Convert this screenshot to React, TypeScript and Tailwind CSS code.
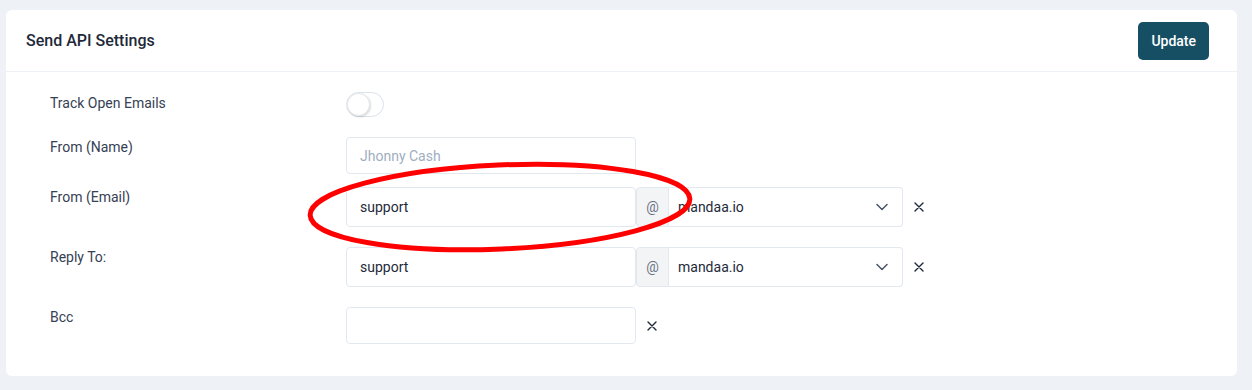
import React from 'react';

const font = { fontFamily: 'Roboto, "Liberation Sans", sans-serif' };

function Chevron() {
  return (
    <svg width="12" height="8" viewBox="0 0 12 8" fill="none" className="text-gray-600">
      <path d="M1 1.5l5 5 5-5" stroke="currentColor" strokeWidth="1.5" strokeLinecap="round" strokeLinejoin="round" />
    </svg>
  );
}

function Close() {
  return (
    <button className="ml-[11px] text-gray-800">
      <svg width="10" height="10" viewBox="0 0 10 10" fill="none">
        <path d="M1 1l8 8M9 1l-8 8" stroke="currentColor" strokeWidth="1.4" strokeLinecap="round" />
      </svg>
    </button>
  );
}

function EmailField({ user }: { user: string }) {
  return (
    <div className="flex items-center">
      <input
        defaultValue={user}
        className="w-[290px] h-[40px] px-[13px] text-sm text-gray-800 border border-[#e2e8f0] rounded-[4px] outline-none"
      />
      <div className="w-[33px] h-[40px] flex items-center justify-center bg-[#f3f4f6] border border-[#e2e8f0] text-sm text-gray-500 rounded-l-[4px]">
        @
      </div>
      <div className="w-[234px] h-[40px] flex items-center justify-between pl-[9px] pr-[14px] border border-l-0 border-[#e2e8f0] rounded-r-[4px] text-sm text-gray-800">
        <span>mandaa.io</span>
        <Chevron />
      </div>
      <Close />
    </div>
  );
}

export default function App() {
  return (
    <div className="h-[390px] bg-[#eef1f6] pt-[10px] pl-[6px] pr-[15px]" style={font}>
      <div className="relative bg-white rounded-md h-[366px]">
        {/* Header */}
        <div className="h-[62px] flex items-center justify-between pl-5 pr-7 border-b border-[#edf0f4]">
          <h2 className="text-base font-medium text-gray-800">Send API Settings</h2>
          <button className="h-[38px] px-[13px] bg-[#164e63] text-white text-sm font-medium rounded-[5px]">
            Update
          </button>
        </div>

        {/* Body */}
        <div className="pt-5 pl-[44px] flex flex-col text-sm text-gray-700">
          <div className="flex">
            <div className="w-[296px] leading-5 pt-px">Track Open Emails</div>
            <div className="w-[38px] h-[25px] rounded-full border border-[#dbe2ea] bg-white relative">
              <div className="absolute left-0 top-0 w-[23px] h-[23px] rounded-full bg-white border border-[#e5e7eb] shadow-[1px_1px_2px_rgba(0,0,0,0.15)]" />
            </div>
          </div>

          <div className="flex mt-5">
            <div className="w-[296px] leading-5">From (Name)</div>
            <input
              placeholder="Jhonny Cash"
              className="w-[290px] h-[37px] px-[13px] text-sm text-gray-800 placeholder:text-[#a0aec0] border border-[#e2e8f0] rounded-[4px] outline-none"
            />
          </div>

          <div className="flex mt-[13px]">
            <div className="w-[296px] leading-5">From (Email)</div>
            <EmailField user="support" />
          </div>

          <div className="flex mt-5">
            <div className="w-[296px] leading-5">Reply To:</div>
            <EmailField user="support" />
          </div>

          <div className="flex mt-5">
            <div className="w-[296px] leading-5">Bcc</div>
            <div className="flex items-center">
              <input className="w-[290px] h-[37px] px-[13px] text-sm border border-[#e2e8f0] rounded-[4px] outline-none" />
              <Close />
            </div>
          </div>
        </div>

        {/* red annotation */}
        <svg className="absolute inset-0 pointer-events-none" width="1231" height="366">
          <ellipse cx="494" cy="197" rx="190" ry="42" fill="none" stroke="#ff0000" strokeWidth="5" transform="rotate(-2.5 494 197)" />
        </svg>
      </div>
    </div>
  );
}
